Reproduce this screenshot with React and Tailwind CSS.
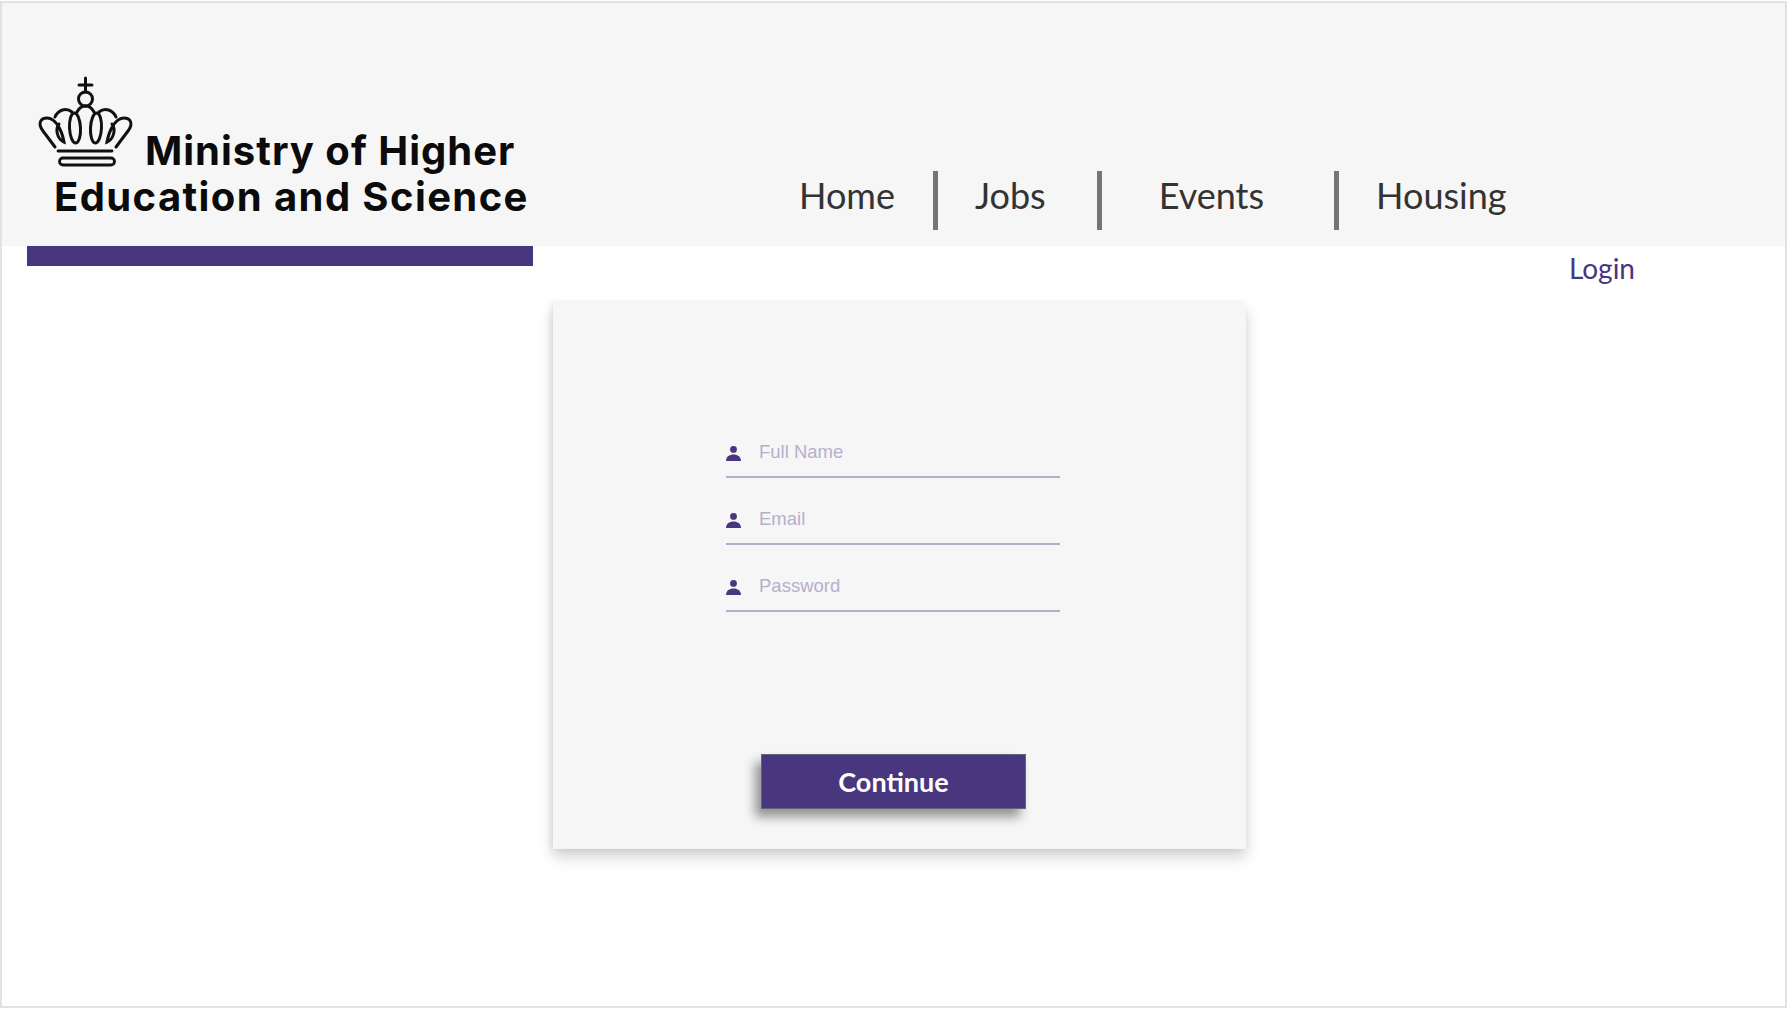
import React from 'react';

const navClass = "font-['Lato',sans-serif] text-[36px] leading-[42px] text-[#333333]";

const Crown = () => {
  const half = (
    <>
      <path d="M25 76L13 60C7 52 11 47 17 47C26 47 32 60 34 71C27 68 25 58 29 53" />
      <path d="M25 46C28 39 36 36 42 41" />
      <ellipse cx="45" cy="57" rx="5.5" ry="15" transform="rotate(-3 45 57)" />
      <path d="M47 41C49 37 52 35 55.5 35" />
    </>
  );
  return (
    <svg width="120" height="110" viewBox="0 0 120 110" fill="none" stroke="#111" strokeWidth="3" strokeLinecap="round">
      <path d="M55.5 7V21M49 14H62" />
      <circle cx="55.5" cy="28" r="7" />
      {half}
      <g transform="translate(111 0) scale(-1 1)">{half}</g>
      <path d="M28 80H82M81 87H33a3.5 3.5 0 0 0 0 7H81a3.5 3.5 0 0 0 0-7" strokeWidth="2.8" />
    </svg>
  );
};

const PersonIcon = () => (
  <svg width="15" height="15" viewBox="0 0 15 15" fill="#48367f" className="shrink-0">
    <circle cx="7.5" cy="3.4" r="3.4" />
    <path d="M0 15C0 10.5 3.5 8.4 7.5 8.4C11.5 8.4 15 10.5 15 15Z" />
  </svg>
);

const Field = ({ label }) => (
  <div className="flex h-[67px] items-end border-b-2 border-[#b3aecb] pb-[15px]">
    <PersonIcon />
    <span className="ml-[18px] font-['Liberation_Sans',sans-serif] text-[18.5px] leading-[22px] mb-[-1px] relative top-[1px] text-[#b5b0cd]">{label}</span>
  </div>
);

const Separator = ({ className }) => <div className={"h-[59px] w-[5px] bg-[#757575] " + className} />;

const App = () => {
  return (
    <div className="h-[1010px] w-[1788px] overflow-hidden bg-white pt-px">
      <div className="h-[1007px] w-[1787px] border-2 border-[#e2e2e2]">
        <header className="flex h-[243px] bg-[#f6f6f6]">
          <div className="relative w-[797px] shrink-0">
            <div className="absolute left-[28px] top-[68px]">
              <Crown />
            </div>
            <div className="absolute left-[52px] top-[125px] font-['Inter',sans-serif] text-[40px] font-bold leading-[46px] text-[#0b0b0b] whitespace-nowrap">
              <div className="pl-[91px] tracking-[1px]">Ministry of Higher</div>
              <div className="tracking-[1.4px]">Education and Science</div>
            </div>
          </div>
          <nav className="flex items-start pt-[168px]">
            <span className={navClass + ' relative top-[3px]'}>Home</span>
            <Separator className="ml-[38px]" />
            <span className={navClass + ' relative top-[3px] ml-[37px]'}>Jobs</span>
            <Separator className="ml-[51px]" />
            <span className={navClass + ' relative top-[3px] ml-[57px]'}>Events</span>
            <Separator className="ml-[70px]" />
            <span className={navClass + ' relative top-[3px] ml-[37px]'}>Housing</span>
          </nav>
        </header>

        <div className="flex items-start justify-between">
          <div className="ml-[25px] h-[20px] w-[506px] bg-[#48367f]" />
          <a className="mr-[150px] mt-[6px] font-['Lato',sans-serif] text-[28px] leading-[32px] text-[#48367f]">Login</a>
        </div>

        <main className="ml-[551px] mt-[19px] h-[546px] w-[693px] bg-[#f6f6f6] pt-[108px] shadow-[0_8px_14px_rgba(0,0,0,0.18),-2px_0_6px_rgba(0,0,0,0.08)]">
          <div className="ml-[173px] w-[334px]">
            <Field label="Full Name" />
            <Field label="Email" />
            <Field label="Password" />
          </div>
          <button className="ml-[208px] mt-[142px] flex h-[55px] w-[265px] items-center justify-center border border-[#66627a] bg-[#48367f] pt-[2px] font-['Lato',sans-serif] text-[27px] font-bold text-white shadow-[-6px_8px_10px_rgba(0,0,0,0.4)]">
            Continue
          </button>
        </main>
      </div>
    </div>
  );
};

export default App;
